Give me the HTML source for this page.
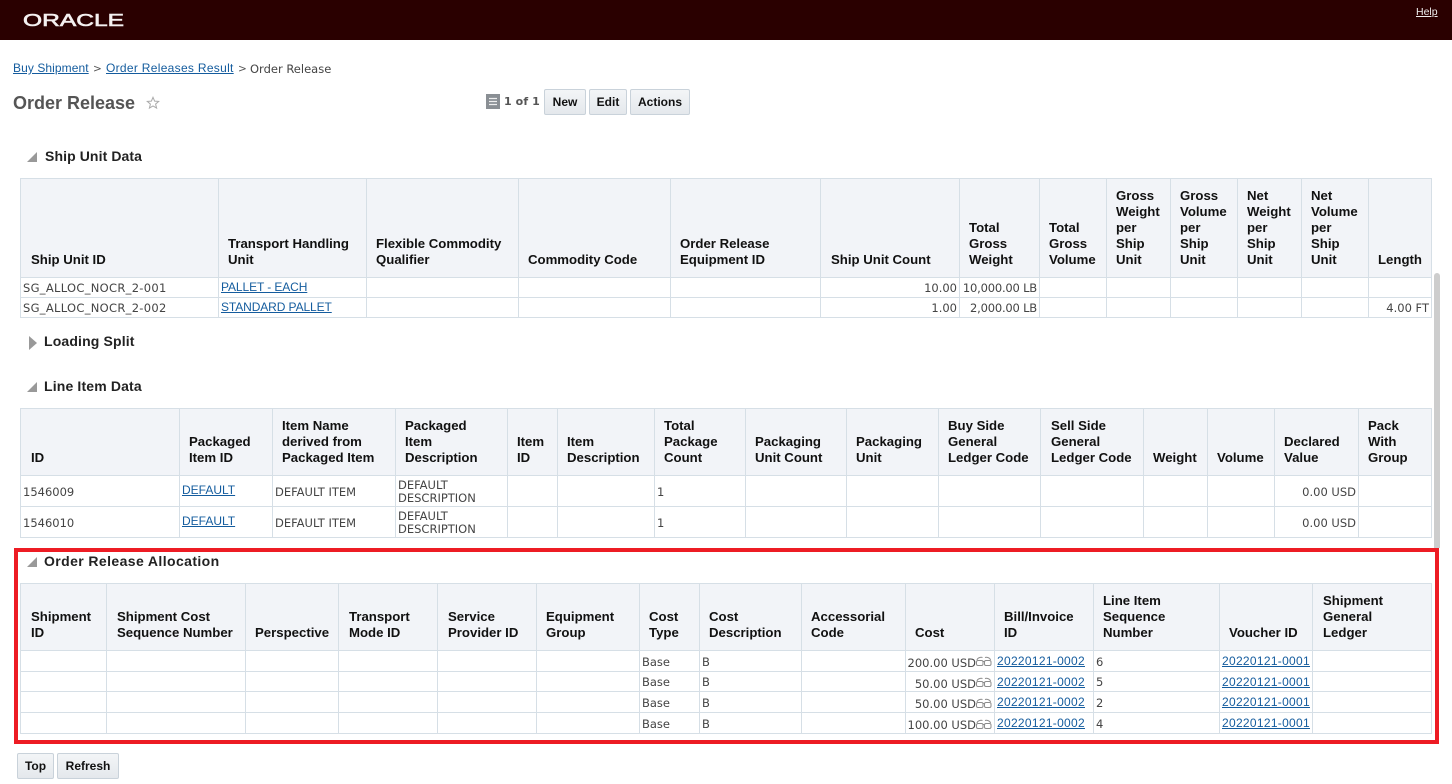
<!DOCTYPE html>
<html><head><meta charset="utf-8"><title>Order Release</title>
<style>
html,body{margin:0;padding:0;width:1452px;height:784px;overflow:hidden;background:#fff;position:relative}
body{font-family:"Liberation Sans",Arial,sans-serif;color:#333}
.abs{position:absolute;white-space:nowrap}
a{color:#145c9e;text-decoration:underline}
table{position:absolute;border-collapse:collapse;table-layout:fixed;border:1px solid #d6dfe6}
th,td{border:1px solid #d6dfe6;padding:0;overflow:hidden}
th{background:#f2f4f8;font:bold 13.2px/16px "Liberation Sans",sans-serif;color:#111;text-align:left;vertical-align:bottom;padding:0 4px 9px 10px}
td{font:11.5px/13px "DejaVu Sans",sans-serif;color:#444;padding:2px 2px 0;vertical-align:middle}
td.r{text-align:right;white-space:nowrap;padding-left:0}
td.w{letter-spacing:-.2px}
td.s{letter-spacing:.3px;white-space:nowrap}
td a{font:12px/14px "Liberation Sans",sans-serif;position:relative;top:-2px;white-space:nowrap}
td a.d{letter-spacing:.3px;top:-1px}
td a.p{letter-spacing:-.1px}
td.c{padding:5px 18px 0 0;text-align:right;white-space:nowrap}
.sec{font:bold 14px/16px "Liberation Sans",sans-serif;color:#222;letter-spacing:.2px}
.btn{position:absolute;box-sizing:border-box;height:26px;border:1px solid #c9d2da;border-radius:2px;background:linear-gradient(#f3f5f7,#e4e8ec);font:bold 12px/24px "Liberation Sans",sans-serif;color:#111;text-align:center}
</style></head><body>

<div class="abs" style="left:0;top:0;width:1452px;height:40px;background:#2a0000"></div>
<svg class="abs" style="left:22px;top:11px" width="108" height="18"><text x="1" y="15" font-family="Liberation Sans" font-size="17.5" fill="#f4f0f0" stroke="#f4f0f0" stroke-width=".6" textLength="101" lengthAdjust="spacingAndGlyphs">ORACLE</text></svg>
<a class="abs" style="left:1416px;top:6px;font-size:10.5px;line-height:13px;color:#eee" href="#">Help</a>

<div class="abs" style="left:13px;top:61px;font-size:12px;line-height:15px;letter-spacing:.08px"><a href="#">Buy Shipment</a></div>
<div class="abs" style="left:93px;top:61px;font:10.5px/16px 'DejaVu Sans',sans-serif;color:#555">&gt;</div>
<div class="abs" style="left:106px;top:61px;font-size:12px;line-height:15px;letter-spacing:.3px"><a href="#">Order Releases Result</a></div>
<div class="abs" style="left:238px;top:61px;font:10.5px/16px 'DejaVu Sans',sans-serif;color:#555">&gt;</div>
<div class="abs" style="left:250px;top:61px;font:11.5px/16px 'DejaVu Sans',sans-serif;color:#444">Order Release</div>

<div class="abs" style="left:13px;top:92px;font:bold 18px/22px 'Liberation Sans',sans-serif;color:#555">Order Release</div>
<svg class="abs" style="left:146px;top:96px" width="14" height="14" viewBox="0 0 14 14"><path d="M7 1.300l1.600 3.800 4.100.3-3.100 2.700 1 4-3.600-2.200-3.600 2.200 1-4L1.300 5.400l4.100-.3z" fill="none" stroke="#aaa" stroke-width="1"/></svg>

<svg class="abs" style="left:486px;top:94px" width="14" height="15"><rect width="14" height="15" fill="#8a8f94"/><path d="M3 4.500h8M3 7.500h8M3 10.500h8" stroke="#eee" stroke-width="1.200"/></svg>
<div class="abs" style="left:504px;top:94px;font:bold 11px/15px 'DejaVu Sans',sans-serif;color:#555;letter-spacing:.1px">1 of 1</div>
<div class="btn" style="left:544px;top:89px;width:42px">New</div>
<div class="btn" style="left:589px;top:89px;width:38px">Edit</div>
<div class="btn" style="left:630px;top:89px;width:60px">Actions</div>

<svg class="abs" style="left:26px;top:151px" width="12" height="12"><path d="M11 1v10H1z" fill="#999"/></svg>
<div class="abs sec" style="left:45px;top:148px;letter-spacing:.1px">Ship Unit Data</div>

<table style="left:20px;top:178px;width:1411px;height:140px">
<colgroup><col style="width:198px"><col style="width:148px"><col style="width:152px"><col style="width:152px"><col style="width:150px"><col style="width:139px"><col style="width:80px"><col style="width:67px"><col style="width:64px"><col style="width:67px"><col style="width:64px"><col style="width:67px"><col style="width:63px"></colgroup>
<tr style="height:99px"><th>Ship Unit ID</th><th style="padding-left:9px">Transport Handling Unit</th><th style="padding-left:9px">Flexible Commodity Qualifier</th><th style="padding-left:9px">Commodity Code</th><th style="padding-left:9px">Order Release Equipment ID</th><th>Ship Unit Count</th><th style="padding-left:9px">Total Gross Weight</th><th style="padding-left:9px">Total Gross Volume</th><th style="padding-left:9px;padding-right:0">Gross<br>Weight<br>per<br>Ship<br>Unit</th><th style="padding-left:9px;padding-right:0">Gross<br>Volume<br>per<br>Ship<br>Unit</th><th style="padding-left:9px;padding-right:0">Net<br>Weight<br>per<br>Ship<br>Unit</th><th style="padding-left:9px;padding-right:0">Net<br>Volume<br>per<br>Ship<br>Unit</th><th style="padding-left:9px;padding-right:0">Length</th></tr>
<tr style="height:20px"><td class="s">SG_ALLOC_NOCR_2-001</td><td><a class="p" href="#">PALLET - EACH</a></td><td></td><td></td><td></td><td class="r">10.00</td><td class="r w">10,000.00 LB</td><td></td><td></td><td></td><td></td><td></td><td></td></tr>
<tr style="height:20px"><td class="s">SG_ALLOC_NOCR_2-002</td><td><a class="p" href="#">STANDARD PALLET</a></td><td></td><td></td><td></td><td class="r">1.00</td><td class="r w">2,000.00 LB</td><td></td><td></td><td></td><td></td><td></td><td class="r">4.00 FT</td></tr>
</table>

<svg class="abs" style="left:29px;top:336px" width="9" height="14"><path d="M0 0l8 7-8 7z" fill="#999"/></svg>
<div class="abs sec" style="left:44px;top:333px;letter-spacing:.15px">Loading Split</div>

<svg class="abs" style="left:26px;top:381px" width="12" height="12"><path d="M11 1v10H1z" fill="#999"/></svg>
<div class="abs sec" style="left:44px;top:378px;letter-spacing:.15px">Line Item Data</div>

<table style="left:20px;top:408px;width:1411px;height:130px">
<colgroup><col style="width:159px"><col style="width:93px"><col style="width:123px"><col style="width:112px"><col style="width:50px"><col style="width:97px"><col style="width:91px"><col style="width:101px"><col style="width:92px"><col style="width:102px"><col style="width:103px"><col style="width:64px"><col style="width:67px"><col style="width:84px"><col style="width:73px"></colgroup>
<tr style="height:67px"><th>ID</th><th style="padding-left:9px">Packaged Item ID</th><th style="padding-left:9px;padding-right:0">Item Name derived from Packaged Item</th><th style="padding-left:9px">Packaged<br>Item<br>Description</th><th style="padding-left:9px;padding-right:0">Item ID</th><th style="padding-left:9px">Item Description</th><th style="padding-left:9px">Total Package Count</th><th style="padding-left:9px">Packaging Unit Count</th><th style="padding-left:9px">Packaging Unit</th><th style="padding-left:9px;padding-right:0">Buy Side General Ledger Code</th><th style="padding-left:10px;padding-right:0">Sell Side General Ledger Code</th><th style="padding-left:9px">Weight</th><th style="padding-left:9px">Volume</th><th style="padding-left:9px">Declared Value</th><th style="padding-left:9px">Pack With Group</th></tr>
<tr style="height:31px"><td>1546009</td><td><a href="#">DEFAULT</a></td><td>DEFAULT ITEM</td><td>DEFAULT DESCRIPTION</td><td></td><td></td><td>1</td><td></td><td></td><td></td><td></td><td></td><td></td><td class="r">0.00 USD</td><td></td></tr>
<tr style="height:31px"><td>1546010</td><td><a href="#">DEFAULT</a></td><td>DEFAULT ITEM</td><td>DEFAULT DESCRIPTION</td><td></td><td></td><td>1</td><td></td><td></td><td></td><td></td><td></td><td></td><td class="r">0.00 USD</td><td></td></tr>
</table>

<div class="abs" style="left:1434px;top:273px;width:6px;height:275px;background:#cdcdcd;border-radius:3px 3px 0 0"></div>

<svg class="abs" style="left:26px;top:556px" width="12" height="12"><path d="M11 1v10H1z" fill="#999"/></svg>
<div class="abs sec" style="left:44px;top:553px;letter-spacing:.4px">Order Release Allocation</div>

<table style="left:20px;top:583px;width:1411px;height:151px">
<colgroup><col style="width:86px"><col style="width:139px"><col style="width:93px"><col style="width:99px"><col style="width:99px"><col style="width:103px"><col style="width:60px"><col style="width:102px"><col style="width:104px"><col style="width:89px"><col style="width:99px"><col style="width:126px"><col style="width:93px"><col style="width:119px"></colgroup>
<tr style="height:67px"><th>Shipment ID</th><th style="padding-left:10px;padding-right:0">Shipment Cost Sequence Number</th><th style="padding-left:9px;padding-right:0">Perspective</th><th style="padding-left:10px">Transport Mode ID</th><th style="padding-left:10px">Service Provider ID</th><th style="padding-left:9px">Equipment Group</th><th style="padding-left:9px">Cost Type</th><th style="padding-left:9px">Cost Description</th><th style="padding-left:9px">Accessorial Code</th><th style="padding-left:9px">Cost</th><th style="padding-left:9px">Bill/Invoice ID</th><th style="padding-left:9px">Line Item Sequence Number</th><th style="padding-left:9px">Voucher ID</th><th style="padding-left:10px">Shipment<br>General<br>Ledger</th></tr>
<tr style="height:21px"><td></td><td></td><td></td><td></td><td></td><td></td><td>Base</td><td>B</td><td></td><td class="c">200.00 USD</td><td><a class="d" href="#">20220121-0002</a></td><td>6</td><td><a class="d" href="#">20220121-0001</a></td><td></td></tr>
<tr style="height:20px"><td></td><td></td><td></td><td></td><td></td><td></td><td>Base</td><td>B</td><td></td><td class="c">50.00 USD</td><td><a class="d" href="#">20220121-0002</a></td><td>5</td><td><a class="d" href="#">20220121-0001</a></td><td></td></tr>
<tr style="height:21px"><td></td><td></td><td></td><td></td><td></td><td></td><td>Base</td><td>B</td><td></td><td class="c">50.00 USD</td><td><a class="d" href="#">20220121-0002</a></td><td>2</td><td><a class="d" href="#">20220121-0001</a></td><td></td></tr>
<tr style="height:21px"><td></td><td></td><td></td><td></td><td></td><td></td><td>Base</td><td>B</td><td></td><td class="c">100.00 USD</td><td><a class="d" href="#">20220121-0002</a></td><td>4</td><td><a class="d" href="#">20220121-0001</a></td><td></td></tr>
</table>

<div class="abs" style="left:14px;top:548px;width:1425px;height:196px;box-sizing:border-box;border:4px solid #ed1c24"></div>

<svg class="abs" style="left:976px;top:656px" width="16" height="80" fill="none" stroke="#8c8c8c" stroke-width="1">
<g><rect x=".5" y="4.500" width="6.500" height="5" rx="1.500"/><rect x="8.500" y="4.500" width="6.500" height="5" rx="1.500"/><path d="M7 5.500h1.500M1 4c.5-2.500 4-3 5.500-2.500M9 1.500c1.500-.5 5 0 5.500 2.500"/></g>
<g transform="translate(0,21)"><rect x=".5" y="4.500" width="6.500" height="5" rx="1.500"/><rect x="8.500" y="4.500" width="6.500" height="5" rx="1.500"/><path d="M7 5.500h1.500M1 4c.5-2.500 4-3 5.500-2.500M9 1.500c1.500-.5 5 0 5.500 2.500"/></g>
<g transform="translate(0,42)"><rect x=".5" y="4.500" width="6.500" height="5" rx="1.500"/><rect x="8.500" y="4.500" width="6.500" height="5" rx="1.500"/><path d="M7 5.500h1.500M1 4c.5-2.500 4-3 5.500-2.500M9 1.500c1.500-.5 5 0 5.500 2.500"/></g>
<g transform="translate(0,63)"><rect x=".5" y="4.500" width="6.500" height="5" rx="1.500"/><rect x="8.500" y="4.500" width="6.500" height="5" rx="1.500"/><path d="M7 5.500h1.500M1 4c.5-2.500 4-3 5.500-2.500M9 1.500c1.500-.5 5 0 5.500 2.500"/></g>
</svg>

<div class="btn" style="left:17px;top:753px;width:37px">Top</div>
<div class="btn" style="left:57px;top:753px;width:62px">Refresh</div>
</body></html>
